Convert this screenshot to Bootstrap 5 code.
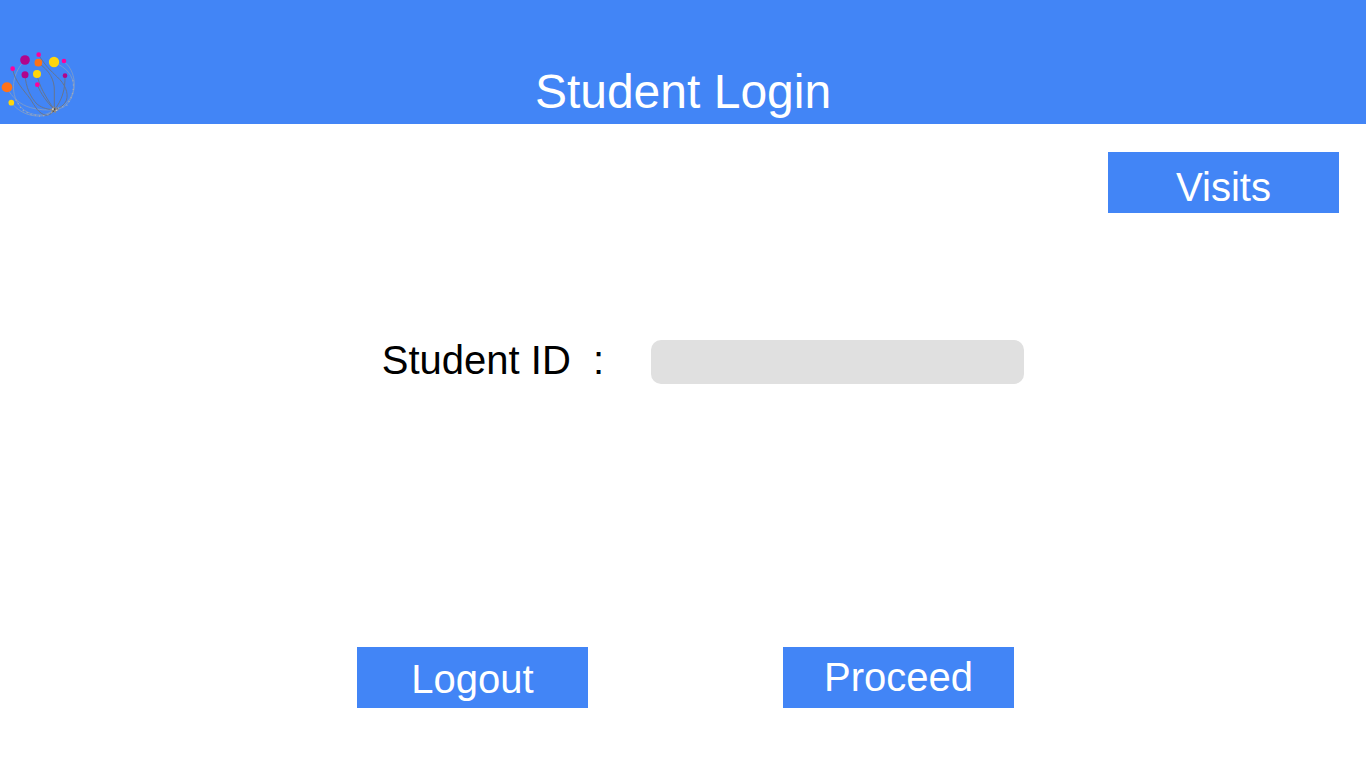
<!DOCTYPE html>
<html lang="en">
<head>
<meta charset="utf-8">
<meta name="viewport" content="width=device-width, initial-scale=1">
<title>Student Login</title>
<link href="https://cdn.jsdelivr.net/npm/bootstrap@5.3.0/dist/css/bootstrap.min.css" rel="stylesheet">
<style>
  body { font-family: "Liberation Sans", Arial, sans-serif; font-size: 40px; line-height: 44px; color: #000; }
  .site-header { display: grid; grid-template-columns: 1fr auto 1fr; min-height: 124px; background: #4285f6; }
  .site-title { font-size: 48px; line-height: 56px; font-weight: 400; }
  .site-logo { width: 80px; height: 72px; }
  .btn-action {
    --bs-btn-color: #fff; --bs-btn-bg: #4285f6;
    --bs-btn-hover-color: #fff; --bs-btn-hover-bg: #2f74e8;
    --bs-btn-active-color: #fff; --bs-btn-active-bg: #2567d6;
    --bs-btn-font-size: 40px; --bs-btn-line-height: 44px;
    --bs-btn-padding-x: 0; --bs-btn-padding-y: 0;
    --bs-btn-border-width: 0; --bs-btn-border-radius: 0;
    width: 231px; height: 61px;
  }
  .visits-bar { padding: 28px 27px 0; }
  .id-form { padding: 127px 0 0 40px; gap: 47px; }
  .id-label { white-space: pre; line-height: 40px; }
  .id-input { width: 373px; height: 44px; background: #e0e0e0; border-radius: 10px; font-size: 28px; }
  .id-input:focus { background: #e0e0e0; }
  .actions { padding: 0 0 60px 5px; column-gap: 195px; row-gap: 24px; }
  .actions .btn-action { padding-bottom: 2px; }
</style>
</head>
<body class="bg-white min-vh-100 d-flex flex-column">
<header class="site-header align-items-end pb-1">
  <svg class="site-logo" viewBox="0 9 240 216" role="img" aria-label="School logo">
    <g fill="none" stroke="#7f9cc8" stroke-width="2.6">
      <path d="M192 50C222 72 232 122 214 158C202 184 184 192 163 194"/>
      <path d="M162 52C198 66 221 92 221 126C220 160 194 186 163 194"/>
      <path d="M75 46C40 80 30 132 52 172C66 198 94 211 124 210C144 208 154 200 163 194"/>
      <path d="M21 128C36 158 62 180 92 188C116 195 142 196 163 194"/>
      <path d="M34 173C58 204 96 218 132 212C148 208 158 202 163 194"/>
    </g>
    <g fill="none" stroke="#66758f" stroke-width="3">
      <path d="M38 72C44 108 70 134 91 162C105 184 116 207 139 211C153 209 160 202 163 194"/>
      <path d="M116 30C136 62 151 76 172 96C194 116 207 144 199 166C193 181 178 190 163 194"/>
      <path d="M115 54C148 76 164 104 163 138V194"/>
      <path d="M111 88C116 121 139 159 163 194"/>
      <path d="M112 120C122 145 141 172 163 194"/>
      <path d="M75 90C78 126 90 156 112 178C128 190 146 194 163 194"/>
      <path d="M195 93C196 130 187 166 163 194"/>
    </g>
    <g fill="none" stroke="#a4acba" stroke-width="4" stroke-dasharray="3 10">
      <path d="M47 164L66 195L92 208L124 214L151 207L163 194L200 181L216 154L221 126L218 98"/>
    </g>
    <g fill="#8e8a86">
      <path d="M148 194l9-4 3-6 5 5 7-4-2 7 9 2-9 3-4 8-5-5-8 3 3-6z"/>
      <path d="M156 190h5v5h-5zM167 194h5v4h-5z" fill="#c5c5c2"/>
      <path d="M162 190h4v6h-4zM158 197h4v3h-4z" fill="#49484b"/>
    </g>
    <g fill="#b1058c">
      <circle cx="75" cy="45" r="14.5"/><circle cx="75" cy="89" r="10.5"/><circle cx="195" cy="92" r="7"/>
    </g>
    <g fill="#ff009c">
      <circle cx="116" cy="29" r="7"/><circle cx="38" cy="71" r="7"/><circle cx="192" cy="48" r="7"/><circle cx="112" cy="119" r="7"/>
    </g>
    <g fill="#ff7219">
      <circle cx="115" cy="53" r="11.5"/><ellipse cx="21" cy="127" rx="16" ry="15"/>
    </g>
    <g fill="#ffd60a">
      <circle cx="162" cy="51" r="15.5"/><circle cx="111" cy="87" r="12"/><circle cx="34" cy="173" r="8.5"/>
    </g>
  </svg>
  <h1 class="site-title text-white text-center mb-0">Student Login</h1>
</header>
<main class="flex-grow-1 d-flex flex-column">
  <div class="visits-bar d-flex justify-content-end">
    <button type="button" class="btn btn-action pt-2">Visits</button>
  </div>
  <form id="login" class="id-form d-flex flex-wrap justify-content-center">
    <label class="id-label" for="student-id">Student ID  :</label>
    <input class="id-input form-control border-0 py-0" type="text" id="student-id" name="student-id">
  </form>
  <div class="actions d-flex flex-wrap justify-content-center mt-auto">
    <button type="button" class="btn btn-action pt-1">Logout</button>
    <button type="submit" form="login" class="btn btn-action">Proceed</button>
  </div>
</main>
<script src="https://cdn.jsdelivr.net/npm/bootstrap@5.3.0/dist/js/bootstrap.bundle.min.js"></script>
</body>
</html>
